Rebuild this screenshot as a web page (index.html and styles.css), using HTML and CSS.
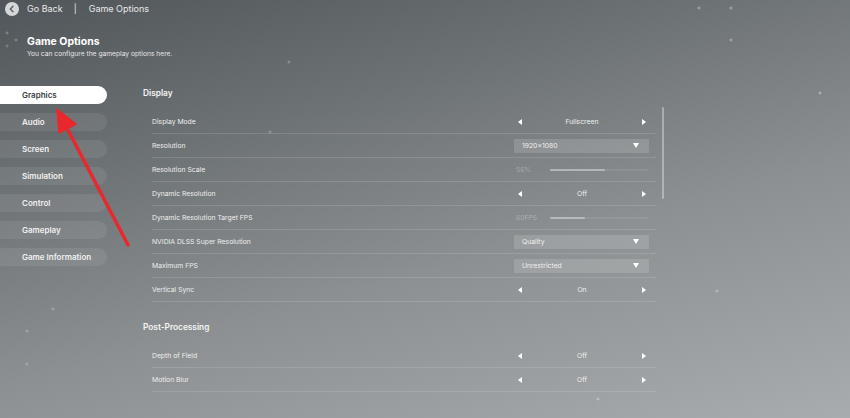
FILE: index.html
```html
<!DOCTYPE html>
<html lang="en">
<head>
    <meta charset="UTF-8">
    <meta name="viewport" content="width=device-width, initial-scale=1.0">
    <title>Game Options</title>
    <link rel="stylesheet" href="styles.css">
</head>
<body>

<div class="page">
    <header class="topbar">
        <span class="back-btn">
            <svg width="14" height="14" viewBox="0 0 14 14"><circle cx="7" cy="7" r="7" fill="#d6d7d8"/><path d="M8 4.2 L5.3 7 L8 9.8" fill="none" stroke="#5a5e61" stroke-width="1.4" stroke-linecap="round" stroke-linejoin="round"/></svg>
        </span>
        <span class="crumb">Go Back</span>
        <span class="crumb-sep">|</span>
        <span class="crumb">Game Options</span>
    </header>

    <div class="intro">
        <h1>Game Options</h1>
        <p>You can configure the gameplay options here.</p>
    </div>

    <div class="main">
        <nav class="sidebar">
            <div class="tab active">Graphics</div>
            <div class="tab">Audio</div>
            <div class="tab">Screen</div>
            <div class="tab">Simulation</div>
            <div class="tab">Control</div>
            <div class="tab">Gameplay</div>
            <div class="tab">Game Information</div>
        </nav>

        <section class="settings">
            <div class="list">
                <h2>Display</h2>
                <div class="row">
                    <span class="label">Display Mode</span>
                    <div class="cycle"><i class="tri-left"></i><span>Fullscreen</span><i class="tri-right"></i></div>
                </div>
                <div class="row">
                    <span class="label">Resolution</span>
                    <div class="dropdown"><span>1920x1080</span><i class="tri-down"></i></div>
                </div>
                <div class="row">
                    <span class="label">Resolution Scale</span>
                    <div class="slider"><span class="slider-value">56%</span><div class="track"><div class="fill" style="width: 55px"></div></div></div>
                </div>
                <div class="row">
                    <span class="label">Dynamic Resolution</span>
                    <div class="cycle"><i class="tri-left"></i><span>Off</span><i class="tri-right"></i></div>
                </div>
                <div class="row">
                    <span class="label">Dynamic Resolution Target FPS</span>
                    <div class="slider"><span class="slider-value">60FPS</span><div class="track"><div class="fill" style="width: 35px"></div></div></div>
                </div>
                <div class="row">
                    <span class="label">NVIDIA DLSS Super Resolution</span>
                    <div class="dropdown"><span>Quality</span><i class="tri-down"></i></div>
                </div>
                <div class="row">
                    <span class="label">Maximum FPS</span>
                    <div class="dropdown"><span>Unrestricted</span><i class="tri-down"></i></div>
                </div>
                <div class="row">
                    <span class="label">Vertical Sync</span>
                    <div class="cycle"><i class="tri-left"></i><span>On</span><i class="tri-right"></i></div>
                </div>

                <h2 class="section-gap">Post-Processing</h2>
                <div class="row">
                    <span class="label">Depth of Field</span>
                    <div class="cycle"><i class="tri-left"></i><span>Off</span><i class="tri-right"></i></div>
                </div>
                <div class="row">
                    <span class="label">Motion Blur</span>
                    <div class="cycle"><i class="tri-left"></i><span>Off</span><i class="tri-right"></i></div>
                </div>
            </div>
            <div class="scrollbar"></div>
        </section>
    </div>

    <svg class="pointer" width="850" height="418" viewBox="0 0 850 418">
        <line x1="128" y1="245" x2="68" y2="130" stroke="#e8282c" stroke-width="3.5" stroke-linecap="round"/>
        <polygon points="57,109 76,124 59,133" fill="#e8282c" stroke="#e8282c" stroke-width="1.5" stroke-linejoin="round"/>
    </svg>
</div>

</body>
</html>
```

FILE: styles.css
```css
html, body {
    margin: 0;
    height: 100%;
}
body {
    font-family: Inter, "Noto Sans", sans-serif;
    color: #f2f2f2;
    overflow: hidden;
    background-color: #808486;
    background-image:
        radial-gradient(circle at 7px 33px, rgba(255,255,255,0.35) 0, rgba(255,255,255,0) 2px),
        radial-gradient(circle at 16px 40px, rgba(255,255,255,0.35) 0, rgba(255,255,255,0) 2px),
        radial-gradient(circle at 7px 46px, rgba(255,255,255,0.3) 0, rgba(255,255,255,0) 2px),
        radial-gradient(circle at 289px 62px, rgba(255,255,255,0.35) 0, rgba(255,255,255,0) 2px),
        radial-gradient(circle at 699px 8px, rgba(255,255,255,0.5) 0, rgba(255,255,255,0) 2px),
        radial-gradient(circle at 731px 8px, rgba(255,255,255,0.5) 0, rgba(255,255,255,0) 2px),
        radial-gradient(circle at 731px 40px, rgba(255,255,255,0.5) 0, rgba(255,255,255,0) 2px),
        radial-gradient(circle at 820px 93px, rgba(255,255,255,0.5) 0, rgba(255,255,255,0) 2px),
        radial-gradient(circle at 53px 309px, rgba(255,255,255,0.35) 0, rgba(255,255,255,0) 2px),
        radial-gradient(circle at 27px 331px, rgba(255,255,255,0.35) 0, rgba(255,255,255,0) 2px),
        radial-gradient(circle at 27px 364px, rgba(255,255,255,0.35) 0, rgba(255,255,255,0) 2px),
        radial-gradient(circle at 717px 291px, rgba(255,255,255,0.45) 0, rgba(255,255,255,0) 2px),
        radial-gradient(circle at 598px 399px, rgba(255,255,255,0.45) 0, rgba(255,255,255,0) 2px),
        radial-gradient(circle at 270px 132px, rgba(255,255,255,0.3) 0, rgba(255,255,255,0) 2px),
        linear-gradient(165deg, #51565a 0%, #6d7275 30%, #8c9092 60%, #a9acae 100%);
}
.page {
    position: relative;
    width: 850px;
    height: 418px;
}
.topbar {
    display: flex;
    align-items: center;
    height: 17px;
    padding: 0 0 0 5px;
    font-size: 9px;
    color: #e8e9ea;
}
.back-btn {
    display: flex;
    margin-right: 8px;
}
.crumb-sep {
    margin: 0 12px 0 11px;
}
.intro {
    padding: 18px 0 0 27px;
}
.intro h1 {
    margin: 0;
    font-size: 10.5px;
    font-weight: 700;
    line-height: 13px;
    color: #ffffff;
}
.intro p {
    margin: 2px 0 0;
    font-size: 6.7px;
    line-height: 9px;
    color: #e4e5e6;
}
.main {
    display: flex;
    margin-top: 26px;
}
.sidebar {
    width: 107px;
    display: flex;
    flex-direction: column;
    gap: 9px;
    padding-top: 1px;
}
.tab {
    height: 18px;
    line-height: 18px;
    padding-left: 22px;
    border-radius: 0 9px 9px 0;
    background-color: rgba(255, 255, 255, 0.08);
    font-size: 8px;
    font-weight: 600;
    color: #f0f0f0;
}
.tab.active {
    background-color: #ffffff;
    color: #3a3d40;
}
.settings {
    display: flex;
    margin-left: 36px;
}
.list {
    width: 513px;
}
.list h2 {
    margin: 0 0 9px;
    height: 16px;
    line-height: 16px;
    font-size: 8.3px;
    font-weight: 600;
    color: #f4f4f4;
}
.list h2.section-gap {
    margin-top: 17px;
}
.row {
    display: grid;
    grid-template-columns: 1fr 135px;
    align-items: center;
    height: 23px;
    margin-left: 9px;
    padding-right: 7px;
    border-bottom: 1px solid rgba(255, 255, 255, 0.13);
}
.label {
    font-size: 6.8px;
    color: #eeeeee;
}
.cycle {
    display: flex;
    justify-content: space-between;
    align-items: center;
    padding: 0 3px 0 4px;
    font-size: 6.8px;
    color: #f0f0f0;
}
.tri-left {
    width: 0;
    height: 0;
    border-top: 3px solid transparent;
    border-bottom: 3px solid transparent;
    border-right: 4px solid #ffffff;
}
.tri-right {
    width: 0;
    height: 0;
    border-top: 3px solid transparent;
    border-bottom: 3px solid transparent;
    border-left: 4px solid #ffffff;
}
.tri-down {
    width: 0;
    height: 0;
    border-left: 3.5px solid transparent;
    border-right: 3.5px solid transparent;
    border-top: 5px solid #ffffff;
}
.dropdown {
    display: flex;
    justify-content: space-between;
    align-items: center;
    height: 14px;
    padding: 0 10px 0 8px;
    background-color: rgba(255, 255, 255, 0.14);
    font-size: 6.8px;
    color: #f0f0f0;
}
.slider {
    display: flex;
    align-items: center;
    gap: 14px;
    padding-left: 2px;
}
.slider-value {
    width: 20px;
    font-size: 6.8px;
    color: rgba(255, 255, 255, 0.3);
}
.track {
    flex: 1;
    height: 2px;
    border-radius: 1px;
    background-color: rgba(255, 255, 255, 0.08);
}
.fill {
    height: 2px;
    border-radius: 1px;
    background-color: rgba(255, 255, 255, 0.35);
}
.scrollbar {
    width: 2px;
    height: 92px;
    margin: 22px 0 0 6px;
    border-radius: 1px;
    background-color: rgba(255, 255, 255, 0.35);
}
.pointer {
    position: absolute;
    left: 0;
    top: 0;
    pointer-events: none;
}
```
